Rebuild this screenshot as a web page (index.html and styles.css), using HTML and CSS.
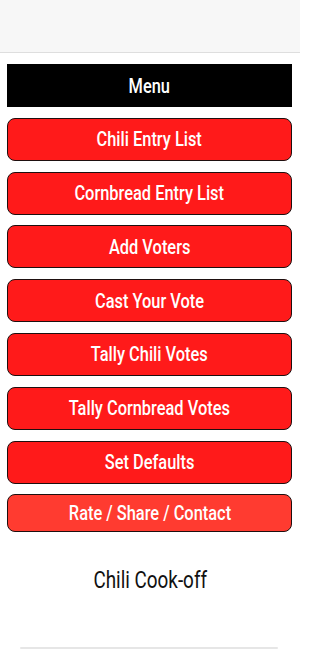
FILE: index.html
```html
<!DOCTYPE html>
<html>
<head>
<meta charset="utf-8">
<link rel="stylesheet" href="styles.css">
</head>
<body>
<div class="screen">
  <header class="topbar"></header>
  <main class="menu">
    <div class="menu-title"><span class="label">Menu</span></div>
    <button class="btn"><span class="label">Chili Entry List</span></button>
    <button class="btn"><span class="label">Cornbread Entry List</span></button>
    <button class="btn"><span class="label">Add Voters</span></button>
    <button class="btn"><span class="label">Cast Your Vote</span></button>
    <button class="btn"><span class="label">Tally Chili Votes</span></button>
    <button class="btn"><span class="label">Tally Cornbread Votes</span></button>
    <button class="btn"><span class="label">Set Defaults</span></button>
    <button class="btn btn-light"><span class="label">Rate / Share / Contact</span></button>
  </main>
  <div class="app-name"><span class="label">Chili Cook-off</span></div>
  <div class="bottom-line"></div>
</div>
</body>
</html>
```

FILE: styles.css
```css
html, body {
  margin: 0;
  padding: 0;
  background: #ffffff;
}
.screen {
  width: 300px;
  height: 649px;
  display: flex;
  flex-direction: column;
  overflow: hidden;
  font-family: Roboto, "Liberation Sans", sans-serif;
}
.topbar {
  height: 52px;
  flex: none;
  background: #f7f7f7;
  border-bottom: 1px solid #dedede;
}
.menu {
  display: flex;
  flex-direction: column;
  gap: 10.8px;
  padding: 11px 8px 0 7px;
}
.label {
  display: inline-block;
  transform: scaleX(0.82);
  white-space: nowrap;
}
.menu-title {
  height: 43px;
  background: #000;
  color: #fff;
  display: flex;
  align-items: center;
  justify-content: center;
  font-size: 20px;
  font-weight: 500;
}
.btn {
  height: 43px;
  margin: 0;
  padding: 0;
  background: #ff1a1a;
  border: 1.8px solid #1e0f0f;
  border-radius: 8px;
  color: #fff;
  font-family: Roboto, "Liberation Sans", sans-serif;
  font-size: 20px;
  font-weight: 500;
  display: flex;
  align-items: center;
  justify-content: center;
}
.btn-light {
  height: 38px;
  background: #ff3b30;
}
.app-name {
  margin-top: 35px;
  text-align: center;
  font-size: 23px;
  line-height: 27px;
  color: #111;
}
.bottom-line {
  margin: auto 22px 0 20px;
  height: 2px;
  background: #e6e6e6;
  border-radius: 1px;
}
```
